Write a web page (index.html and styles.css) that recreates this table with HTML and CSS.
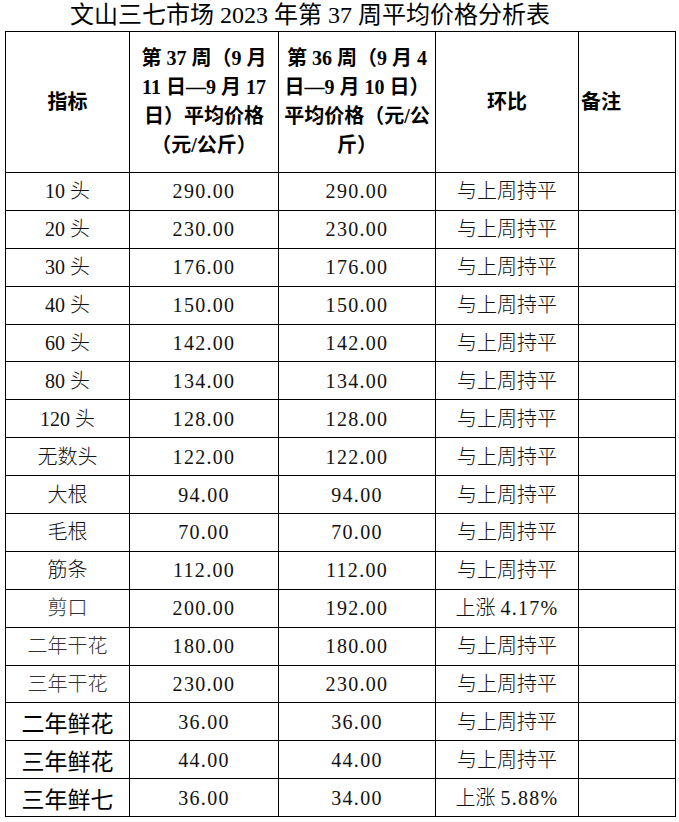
FILE: index.html
```html
<!DOCTYPE html>
<html lang="zh-CN">
<head>
<meta charset="utf-8">
<title>文山三七市场2023年第37周平均价格分析表</title>
<link rel="stylesheet" href="styles.css">
</head>
<body>
<div class="title">文山三七市场 2023 年第 37 周平均价格分析表</div>
<table class="price-table">
  <colgroup>
    <col class="c1"><col class="c2"><col class="c3"><col class="c4"><col class="c5">
  </colgroup>
  <thead>
    <tr class="head">
      <th>指标</th>
      <th>第 37 周（9 月<br>11 日—9 月 17<br>日）平均价格<br>（元/公斤）</th>
      <th>第 36 周（9 月 4<br>日—9 月 10 日）<br>平均价格（元/公<br>斤）</th>
      <th>环比</th>
      <th class="note">备注</th>
    </tr>
  </thead>
  <tbody>
    <tr><td>10 头</td><td class="num">290.00</td><td class="num">290.00</td><td>与上周持平</td><td></td></tr>
    <tr><td>20 头</td><td class="num">230.00</td><td class="num">230.00</td><td>与上周持平</td><td></td></tr>
    <tr><td>30 头</td><td class="num">176.00</td><td class="num">176.00</td><td>与上周持平</td><td></td></tr>
    <tr><td>40 头</td><td class="num">150.00</td><td class="num">150.00</td><td>与上周持平</td><td></td></tr>
    <tr><td>60 头</td><td class="num">142.00</td><td class="num">142.00</td><td>与上周持平</td><td></td></tr>
    <tr><td>80 头</td><td class="num">134.00</td><td class="num">134.00</td><td>与上周持平</td><td></td></tr>
    <tr><td>120 头</td><td class="num">128.00</td><td class="num">128.00</td><td>与上周持平</td><td></td></tr>
    <tr><td>无数头</td><td class="num">122.00</td><td class="num">122.00</td><td>与上周持平</td><td></td></tr>
    <tr><td>大根</td><td class="num">94.00</td><td class="num">94.00</td><td>与上周持平</td><td></td></tr>
    <tr><td>毛根</td><td class="num">70.00</td><td class="num">70.00</td><td>与上周持平</td><td></td></tr>
    <tr><td>筋条</td><td class="num">112.00</td><td class="num">112.00</td><td>与上周持平</td><td></td></tr>
    <tr><td class="light">剪口</td><td class="num">200.00</td><td class="num">192.00</td><td>上涨 <span class="num">4.17%</span></td><td></td></tr>
    <tr><td class="light">二年干花</td><td class="num">180.00</td><td class="num">180.00</td><td>与上周持平</td><td></td></tr>
    <tr><td class="light">三年干花</td><td class="num">230.00</td><td class="num">230.00</td><td>与上周持平</td><td></td></tr>
    <tr><td class="big">二年鲜花</td><td class="num">36.00</td><td class="num">36.00</td><td>与上周持平</td><td></td></tr>
    <tr><td class="big">三年鲜花</td><td class="num">44.00</td><td class="num">44.00</td><td>与上周持平</td><td></td></tr>
    <tr><td class="big">三年鲜七</td><td class="num">36.00</td><td class="num">34.00</td><td>上涨 <span class="num">5.88%</span></td><td></td></tr>
  </tbody>
</table>
</body>
</html>
```

FILE: styles.css
```css
html, body {
  margin: 0;
  padding: 0;
  background: #fff;
}
body {
  color: #000;
  font-family: "Liberation Serif", "Noto Sans CJK SC", serif;
}
.title {
  height: 31px;
  line-height: 30px;
  font-size: 24px;
  padding-left: 70px;
  font-family: "Liberation Serif", "Noto Sans CJK SC", sans-serif;
  white-space: nowrap;
}
.price-table {
  margin-left: 5px;
  border-collapse: collapse;
  table-layout: fixed;
  width: 670px;
}
.c1 { width: 124px; }
.c2 { width: 149px; }
.c3 { width: 157px; }
.c4 { width: 143px; }
.c5 { width: 97px; }
.price-table th,
.price-table td {
  border: 1px solid #000;
  padding: 0 2px;
  text-align: center;
  vertical-align: middle;
  white-space: nowrap;
}
.price-table tr.head {
  height: 141px;
}
.price-table th {
  font-size: 20px;
  line-height: 29px;
  font-weight: bold;
}
.price-table th.note {
  text-align: left;
}
.price-table tbody tr {
  height: 37.9px;
}
.price-table td {
  font-size: 20px;
  line-height: 24px;
  font-weight: 300;
  color: #111;
}
.price-table td.num,
.price-table .num {
  letter-spacing: 1.3px;
  font-weight: normal;
}
.price-table td.light {
  color: #333;
}
.price-table td.big {
  font-family: "Noto Sans CJK SC", sans-serif;
  font-size: 23px;
  font-weight: 400;
  color: #000;
}
```
